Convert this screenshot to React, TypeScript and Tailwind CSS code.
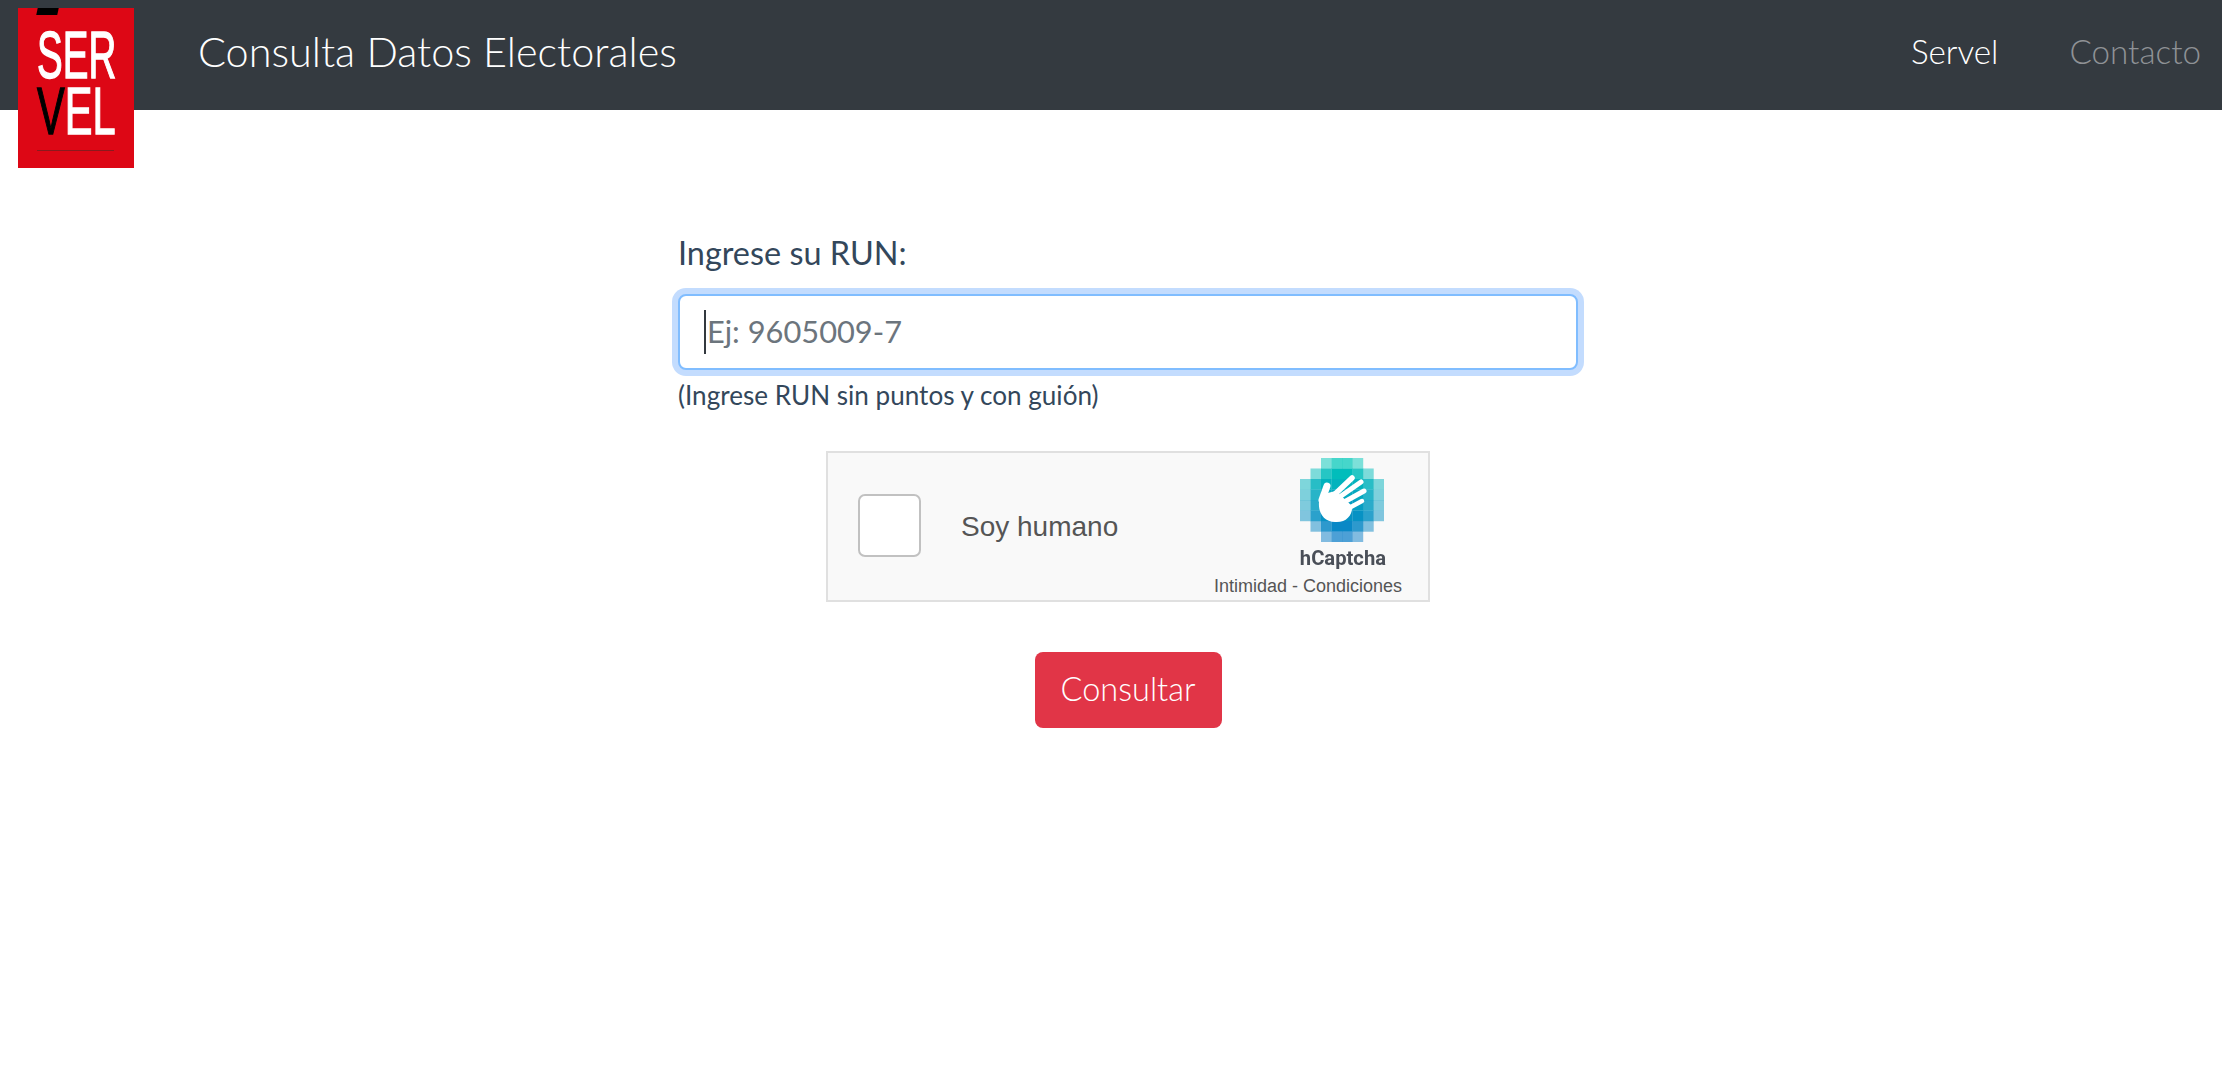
const latoFont = "font-['Lato','Noto_Sans',sans-serif]";

function HCaptchaMark() {
  const rows = [
    [2, 5],
    [1, 6],
    [0, 7],
    [0, 7],
    [0, 7],
    [0, 7],
    [1, 6],
    [2, 5],
  ];
  const cell = 84 / 8;
  const cells: { x: number; y: number; fill: string; opacity: number }[] = [];
  rows.forEach(([from, to], r) => {
    for (let c = from; c <= to; c++) {
      const t = r / 7;
      const red = Math.round(10 * t);
      const green = Math.round(200 - 75 * t);
      const blue = Math.round(185 + 15 * t);
      const edge = c === from || c === to;
      const capRow = r === 0 || r === 7;
      const near = c === from + 1 || c === to - 1;
      let opacity = 1;
      if (capRow) opacity = edge ? 0.5 : 0.72;
      else if (edge) opacity = 0.5;
      else if (near) opacity = 0.85;
      cells.push({ x: c * cell, y: r * cell, fill: `rgb(${red},${green},${blue})`, opacity });
    }
  });
  return (
    <svg width="84" height="84" viewBox="0 0 84 84" className="block blur-[0.6px]">
      {cells.map((k, i) => (
        <rect key={i} x={k.x} y={k.y} width={cell + 0.2} height={cell + 0.2} fill={k.fill} opacity={k.opacity} />
      ))}
      <g stroke="#ffffff" strokeLinecap="round" fill="none">
        <path d="M33 38 L52 20" strokeWidth="5.5" />
        <path d="M41 38 L61 24" strokeWidth="5" />
        <path d="M46 43 L64 33" strokeWidth="5" />
        <path d="M49 50 L62 43" strokeWidth="4.5" />
        <path d="M22 42 L27 28" strokeWidth="7" />
      </g>
      <path d="M19 44 C19 37 27 35 36 33 L52 48 C53 57 46 65 35 64 C25 64 18 56 19 44 Z" fill="#ffffff" />
    </svg>
  );
}

function Logo() {
  return (
    <div className="relative mt-2 flex h-[160px] w-[116px] shrink-0 flex-col bg-[#dd0715] pl-[19px] pt-[19px] font-['Liberation_Sans',sans-serif]">
      <span className="absolute left-[19px] top-0 h-[7px] w-[21px] -skew-x-12 bg-black" />
      <div className="h-[56px] w-[77px] origin-left scale-x-[0.575] whitespace-nowrap text-[67px] leading-[56px] text-white [-webkit-text-stroke:1.4px_white]">SER</div>
      <div className="h-[56px] w-[77px] origin-left scale-x-[0.62] whitespace-nowrap text-[67px] leading-[56px] text-white [-webkit-text-stroke:1.4px_white]">
        <span className="text-black [-webkit-text-stroke:1.4px_black]">V</span>EL
      </div>
      <div className="mt-[11px] h-px w-[77px] bg-[#8a1a1e]" />
    </div>
  );
}

export default function App() {
  return (
    <div className={`min-h-[1086px] bg-white ${latoFont}`}>
      <nav className="flex h-[110px] items-start bg-[#343a40] pl-[18px] pr-[21px]">
        <Logo />
        <h1 className="ml-[64px] flex h-[102px] items-center text-[41.4px] font-light text-white">Consulta Datos Electorales</h1>
        <div className="ml-auto flex h-[104px] items-center gap-[71px] text-[33.2px] font-light">
          <a className="text-white">Servel</a>
          <a className="text-[#8f9296]">Contacto</a>
        </div>
      </nav>

      <main className="ml-[678px] flex w-[900px] flex-col pt-[120px]">
        <label className="text-[32.4px] leading-[46px] text-[#33475b]">Ingrese su RUN:</label>
        <div className="relative mt-[18px]">
          <input
            readOnly
            placeholder="Ej: 9605009-7"
            className="block h-[76px] w-full rounded-[8px] border-2 border-[#80bdff] bg-white pb-[2px] pl-[27px] text-[30.8px] text-[#495057] outline-none ring-[6px] ring-[#c3dcfe] placeholder:text-[#6c757d]"
          />
          <span className="absolute left-[26px] top-[16px] h-[44px] w-[2px] bg-[#33393f]" />
        </div>
        <p className="mt-[9px] text-[26.1px] leading-[32px] text-[#33475b]">(Ingrese RUN sin puntos y con guión)</p>

        <div className="mt-[40px] flex h-[151px] w-[604px] items-start self-center border-2 border-[#e0e0e0] bg-[#f9f9f9] font-['Liberation_Sans',sans-serif]">
          <div className="ml-[30px] mt-[41px] h-[63px] w-[63px] rounded-[7px] border-2 border-[#c1c1c1] bg-white" />
          <span className="ml-[40px] mt-[56px] text-[28px] leading-[36px] text-[#555555]">Soy humano</span>
          <div className="ml-auto mr-[26px] mt-[5px] flex w-[187px] flex-col items-end">
            <div className="mr-[18px]">
              <HCaptchaMark />
            </div>
            <span className="mr-[16px] mt-[5px] font-['Roboto',sans-serif] text-[20.2px] font-bold leading-[22px] text-[#4a4f58] blur-[0.4px]">hCaptcha</span>
            <span className="mt-[6px] whitespace-nowrap text-[18px] leading-[22px] text-[#555555]">Intimidad - Condiciones</span>
          </div>
        </div>

        <button className="mt-[50px] h-[76px] w-[187px] self-center rounded-[8px] bg-[#e13547] pb-[2px] text-[32.5px] font-light text-white">Consultar</button>
      </main>
    </div>
  );
}
